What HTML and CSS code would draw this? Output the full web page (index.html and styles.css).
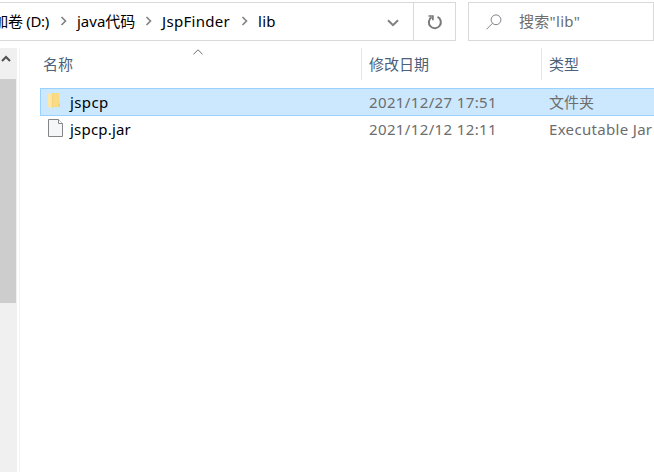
FILE: index.html
```html
<!DOCTYPE html>
<html lang="zh-CN">
<head>
<meta charset="utf-8">
<title>lib</title>
<link rel="stylesheet" href="styles.css">
</head>
<body>
<header class="toolbar">
  <nav class="address">
    <span class="crumb drive"><span>加卷 (D:)</span></span>
    <svg class="sep" viewBox="0 0 8 10"><path d="M1.5 1l4 4-4 4"/></svg>
    <span class="crumb java">java代码</span>
    <svg class="sep" viewBox="0 0 8 10"><path d="M1.5 1l4 4-4 4"/></svg>
    <span class="crumb finder">JspFinder</span>
    <svg class="sep" viewBox="0 0 8 10"><path d="M1.5 1l4 4-4 4"/></svg>
    <span class="crumb lib">lib</span>
    <svg class="drop" viewBox="0 0 12 8"><path d="M1 1.2l5 5 5-5"/></svg>
  </nav>
  <div class="refresh">
    <svg viewBox="0 0 16 16"><path d="M10.500 2.800A6 6 0 1 1 4.500 3.200"/><path d="M1.500 2h4.400v4.300" stroke-width="1.700"/></svg>
  </div>
  <div class="search">
    <svg viewBox="0 0 16 16"><circle cx="10" cy="5.8" r="4.9"/><path d="M6.4 9.4L.5 15.3"/></svg>
    <span>搜索"lib"</span>
  </div>
</header>
<main class="content">
  <aside class="scrollbar">
    <svg viewBox="0 0 10 8"><path d="M1 6l4-4 4 4"/></svg>
    <div class="thumb"></div>
  </aside>
  <section class="files">
    <div class="head">
      <div class="name">名称<svg class="sort" viewBox="0 0 10 6"><path d="M.5 5.2L5 .8l4.500 4.400"/></svg></div>
      <div class="date">修改日期</div>
      <div class="type">类型</div>
    </div>
    <div class="row selected">
      <div class="name">
        <svg class="folder" viewBox="0 0 14 18"><path d="M3 1h8.500v10.500l.5 1V15H3z" fill="#f9db84"/><path d="M10.500 11.500H12V15h-1.500z" fill="#f2cf75"/><path d="M0 1l4 2v14l-4-2.500z" fill="#ffe7a3"/><path d="M4.300 3v13" stroke="#f2cf7c" stroke-width=".8"/></svg>
        <span class="label">jspcp</span>
      </div>
      <div class="date num">2021/12/27 17:51</div>
      <div class="type">文件夹</div>
    </div>
    <div class="row">
      <div class="name">
        <svg class="file" viewBox="0 0 16 18"><path d="M.5.5h10l4 4v13H.5z" fill="#f4f6f7" stroke="#858585"/><path d="M10.500.5v4h4" fill="#fff" stroke="#858585"/></svg>
        <span class="label">jspcp.jar</span>
      </div>
      <div class="date num">2021/12/12 12:11</div>
      <div class="type latin">Executable Jar</div>
    </div>
  </section>
</main>
</body>
</html>
```

FILE: styles.css
```css
* { box-sizing: border-box; }
body {
  margin: 0;
  width: 654px;
  height: 472px;
  overflow: hidden;
  background: #fff;
  color: #000;
  font: 15px/20px "Noto Sans", "Noto Sans CJK SC", sans-serif;
  white-space: nowrap;
}
svg { display: block; fill: none; flex: none; }
.toolbar { display: flex; padding-top: 2px; height: 48px; }
.address, .refresh, .search { height: 39px; border: 1px solid #d9d9d9; display: flex; align-items: center; }
.address { width: 414px; border-left: 0; }
.crumb { flex: none; padding-bottom: 2px; }
.drive { width: 60px; display: flex; justify-content: flex-end; padding-right: 11px; letter-spacing: -.3px; }
.java { width: 68px; margin-left: 9px; }
.finder { width: 79px; margin-left: 9px; letter-spacing: .3px; }
.lib { margin-left: 9px; letter-spacing: .3px; }
.sep { width: 8px; height: 10px; margin-bottom: 1px; stroke: #808080; stroke-width: 1.6; }
.drop { width: 12px; height: 8px; margin: 2px 14px 0 auto; stroke: #808080; stroke-width: 2; }
.refresh { width: 42px; border-left: 0; justify-content: center; }
.refresh svg { width: 16px; height: 16px; stroke: #7a7a7a; stroke-width: 2; }
.search { width: 186px; margin-left: 12px; padding-left: 17px; color: #6d6d6d; }
.search svg { width: 16px; height: 16px; margin-right: 17px; stroke: #85808c; stroke-width: 1; }
.search span { padding-bottom: 2px; letter-spacing: .3px; }
.content { display: flex; height: 424px; }
.scrollbar { width: 17px; background: #f0f0f0; }
.scrollbar svg { width: 10px; height: 8px; margin: 7px 0 16px 1px; stroke: #505050; stroke-width: 2; }
.thumb { width: 16px; height: 224px; background: #cdcdcd; }
.files { flex: 1; margin-left: 2px; padding-left: 20px; border-left: 1px solid #f2f2f2; }
.head { display: flex; height: 40px; color: #4c607a; }
.head > div { height: 32px; padding-top: 6px; }
.head .name { position: relative; width: 322px; padding-left: 3px; border-right: 1px solid #e5e5e5; }
.head .date { width: 180px; padding-left: 7px; border-right: 1px solid #e5e5e5; }
.head .type { padding-left: 7px; }
.sort { position: absolute; left: 153px; top: 1px; width: 10px; height: 6px; stroke: #6d6d6d; stroke-width: 1; }
.row { display: flex; height: 26px; align-items: center; color: #6d6d6d; }
.row.selected { height: 28px; background: #cce8ff; border: 1px solid #99d1ff; border-right: 0; }
.row .name { width: 329px; padding-left: 8px; display: flex; align-items: center; color: #000; letter-spacing: .2px; }
.selected .name { width: 328px; padding-left: 7px; }
.selected .label { letter-spacing: .4px; }
.row .date { width: 180px; }
.folder { width: 14px; height: 18px; margin: -2px 8px 0 0; }
.file { width: 16px; height: 18px; margin: -2px 6px 0 0; }
.row .num { letter-spacing: .37px; }
.latin { letter-spacing: .32px; }
```
